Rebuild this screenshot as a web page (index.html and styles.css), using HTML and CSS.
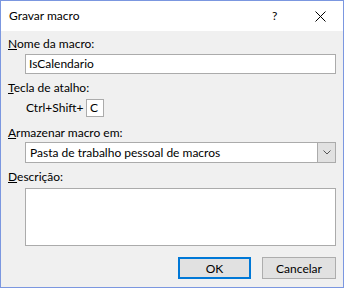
FILE: index.html
```html
<!DOCTYPE html>
<html>
<head>
<meta charset="utf-8">
<link rel="stylesheet" href="styles.css">
</head>
<body>
<div class="window">
  <div class="titlebar">
    <span class="title">Gravar macro</span>
    <span class="help">?</span>
    <span class="close"><svg width="11" height="11" viewBox="0 0 11 11"><path d="M0.5 0.5L10.5 10.5M10.5 0.5L0.5 10.5" stroke="#000" stroke-width="1" fill="none"/></svg></span>
  </div>
  <div class="content">
    <div class="label l1"><u>N</u>ome da macro:</div>
    <div class="field input">IsCalendario</div>
    <div class="label l2"><u>T</u>ecla de atalho:</div>
    <div class="shortcut"><span class="combo">Ctrl+Shift+</span><span class="keybox">C</span></div>
    <div class="label l3"><u>A</u>rmazenar macro em:</div>
    <div class="field select">
      <span class="sel-text">Pasta de trabalho pessoal de macros</span>
      <span class="arrow"><svg width="8" height="5" viewBox="0 0 8 5"><path d="M0.5 0.5L4 4L7.5 0.5" stroke="#555" stroke-width="1" fill="none"/></svg></span>
    </div>
    <div class="label l4"><u>D</u>escrição:</div>
    <div class="field textarea"></div>
    <div class="buttons">
      <div class="btn ok">OK</div>
      <div class="btn cancel">Cancelar</div>
    </div>
  </div>
</div>
</body>
</html>
```
FILE: styles.css
```css
* { box-sizing: border-box; }
html, body { margin: 0; padding: 0; background: #fff; }
body {
  font-family: "Lato", "Noto Sans", sans-serif;
  font-size: 12px;
  color: #000;
}
.window {
  width: 344px;
  height: 288px;
  border: 1px solid #7b97e0;
  display: flex;
  flex-direction: column;
  background: #f0f0f0;
}
.titlebar {
  height: 30px;
  background: #fff;
  display: flex;
  align-items: center;
  padding-left: 8px;
  flex-shrink: 0;
}
.title { flex: 1; line-height: 16px; }
.help { width: 8px; margin-right: 35px; line-height: 16px; }
.close { width: 11px; height: 11px; margin-right: 17px; display: flex; }
.content {
  flex: 1;
  display: flex;
  flex-direction: column;
  padding: 0 7px;
}
.label { line-height: 16px; height: 16px; white-space: nowrap; }
.l1 { margin-top: 5px; }
.l2 { margin-top: 6px; }
.l3 { margin-top: 8px; }
.l4 { margin-top: 6px; }
.field {
  margin-left: 17px;
  background: #fff;
  border: 1px solid #ababab;
}
.input {
  margin-top: 2px;
  height: 20px;
  line-height: 18px;
  padding-left: 3px;
}
.shortcut {
  margin-top: 3px;
  height: 18px;
  display: flex;
  align-items: center;
  margin-left: 18px;
}
.combo { width: 60px; line-height: 16px; white-space: nowrap; }
.keybox {
  width: 18px;
  height: 18px;
  background: #fff;
  border: 1px solid #ababab;
  line-height: 16px;
  padding-left: 3px;
}
.select {
  margin-top: 1px;
  height: 21px;
  display: flex;
}
.sel-text { flex: 1; line-height: 19px; padding-left: 4px; }
.arrow {
  width: 18px;
  background: #e1e1e1;
  border-left: 1px solid #ababab;
  display: flex;
  align-items: center;
  justify-content: center;
}
.textarea {
  margin-top: 3px;
  height: 58px;
}
.buttons {
  margin-top: 11px;
  display: flex;
  justify-content: flex-end;
  gap: 11px;
}
.btn {
  height: 22px;
  background: #e1e1e1;
  border: 1px solid #adadad;
  display: flex;
  align-items: center;
  justify-content: center;
}
.ok { width: 73px; border: 2px solid #0078d7; }
.cancel { width: 74px; }
```
